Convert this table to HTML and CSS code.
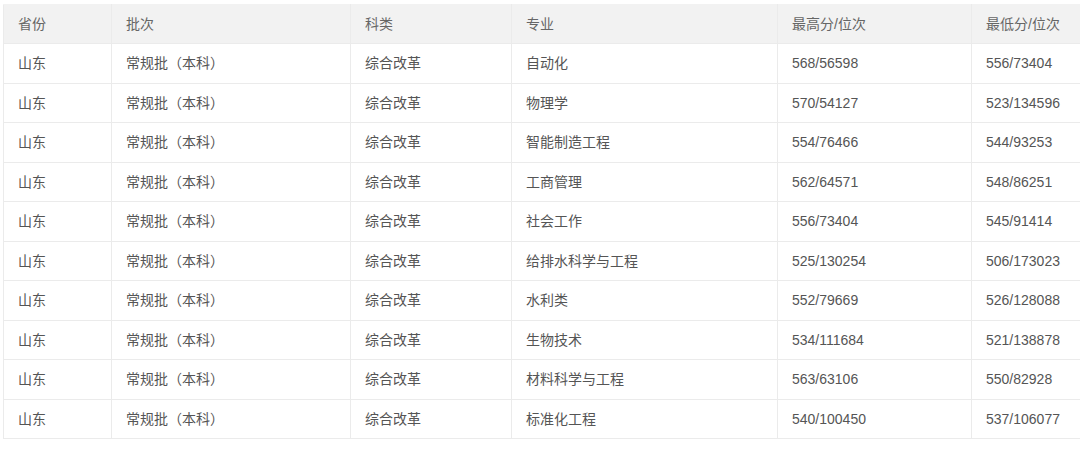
FILE: index.html
```html
<!DOCTYPE html>
<html lang="zh">
<head>
<meta charset="utf-8">
<link rel="stylesheet" href="styles.css">
</head>
<body>
<div class="table-wrap">
<table class="score-table">
  <colgroup>
    <col class="c1"><col class="c2"><col class="c3"><col class="c4"><col class="c5"><col class="c6">
  </colgroup>
  <thead>
    <tr><th>省份</th><th>批次</th><th>科类</th><th>专业</th><th>最高分/位次</th><th>最低分/位次</th></tr>
  </thead>
  <tbody>
    <tr><td>山东</td><td>常规批（本科）</td><td>综合改革</td><td>自动化</td><td>568/56598</td><td>556/73404</td></tr>
    <tr><td>山东</td><td>常规批（本科）</td><td>综合改革</td><td>物理学</td><td>570/54127</td><td>523/134596</td></tr>
    <tr><td>山东</td><td>常规批（本科）</td><td>综合改革</td><td>智能制造工程</td><td>554/76466</td><td>544/93253</td></tr>
    <tr><td>山东</td><td>常规批（本科）</td><td>综合改革</td><td>工商管理</td><td>562/64571</td><td>548/86251</td></tr>
    <tr><td>山东</td><td>常规批（本科）</td><td>综合改革</td><td>社会工作</td><td>556/73404</td><td>545/91414</td></tr>
    <tr><td>山东</td><td>常规批（本科）</td><td>综合改革</td><td>给排水科学与工程</td><td>525/130254</td><td>506/173023</td></tr>
    <tr><td>山东</td><td>常规批（本科）</td><td>综合改革</td><td>水利类</td><td>552/79669</td><td>526/128088</td></tr>
    <tr><td>山东</td><td>常规批（本科）</td><td>综合改革</td><td>生物技术</td><td>534/111684</td><td>521/138878</td></tr>
    <tr><td>山东</td><td>常规批（本科）</td><td>综合改革</td><td>材料科学与工程</td><td>563/63106</td><td>550/82928</td></tr>
    <tr><td>山东</td><td>常规批（本科）</td><td>综合改革</td><td>标准化工程</td><td>540/100450</td><td>537/106077</td></tr>
  </tbody>
</table>
</div>
</body>
</html>
```

FILE: styles.css
```css
html, body {
  margin: 0;
  padding: 0;
  background: #ffffff;
}
body {
  width: 1080px;
  height: 453px;
  overflow: hidden;
  box-sizing: border-box;
  padding: 4px 0 0 3px;
  font-family: "Liberation Sans", "Noto Sans CJK SC", sans-serif;
  font-size: 14px;
  color: #555555;
}
.table-wrap {
  width: 1077px;
  overflow: hidden;
}
.score-table {
  border-collapse: collapse;
  table-layout: fixed;
  width: 1160px;
}
.c1 { width: 108px; }
.c2 { width: 239px; }
.c3 { width: 161px; }
.c4 { width: 266px; }
.c5 { width: 194px; }
.c6 { width: 192px; }
.score-table th,
.score-table td {
  border: 1px solid #ebebeb;
  padding: 0 15px 0 14px;
  height: 38.5px;
  text-align: left;
  vertical-align: middle;
  white-space: nowrap;
  font-weight: normal;
  line-height: 18px;
}
.score-table thead th {
  background: #f2f2f2;
  color: #666666;
  border-top-color: #f2f2f2;
  height: 38px;
}
```
